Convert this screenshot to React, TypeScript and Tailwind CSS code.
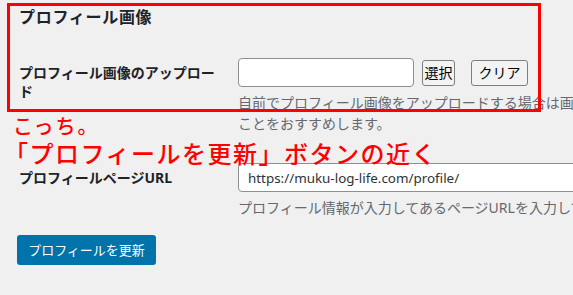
const FONT = "font-['Noto_Sans','Noto_Sans_CJK_JP',sans-serif]";

const App = () => {
  return (
    <div className={`relative w-[573px] h-[295px] overflow-hidden bg-[#f0f0f0] text-[#1d2327] ${FONT}`}>
      {/* 設定フォーム */}
      <div className="pt-[7px] pl-[19px]">
        <h2 className="text-[16px] font-bold leading-[20px] tracking-[0.7px]">プロフィール画像</h2>

        <div className="flex mt-[31px]">
          <div className="w-[219px] shrink-0 pr-[19px] pt-[5px] text-[14px] font-bold leading-[19px]">
            プロフィール画像のアップロード
          </div>
          <div>
            <div className="flex items-center">
              <input
                type="text"
                className="w-[176px] h-[29px] bg-white border border-[#8c8f94] rounded-[4px] outline-none"
              />
              <button className="ml-[8px] w-[33px] h-[26px] text-[14px] leading-none border border-[#7e7e7e] rounded-[3px] bg-[#f3f3f3] text-black">
                選択
              </button>
              <button className="ml-[16px] w-[57px] h-[26px] text-[14px] leading-none border border-[#7e7e7e] rounded-[3px] bg-[#f3f3f3] text-black">
                クリア
              </button>
            </div>
            <p className="mt-[5px] text-[14px] leading-[21px] text-[#646970] whitespace-nowrap">
              自前でプロフィール画像をアップロードする場合は画像を正方形にする
              <br />
              ことをおすすめします。
            </p>
          </div>
        </div>

        <div className="flex mt-[29px]">
          <div className="w-[219px] shrink-0 pr-[19px] pt-[5px] text-[14px] font-bold leading-[19px]">
            プロフィールページURL
          </div>
          <div>
            <input
              type="text"
              defaultValue="https://muku-log-life.com/profile/"
              className="w-[400px] h-[29px] px-[9px] bg-white border border-[#8c8f94] rounded-[4px] text-[13.4px] text-[#2c3338] outline-none"
            />
            <p className="mt-[5px] text-[14px] leading-[21px] text-[#646970] whitespace-nowrap">
              プロフィール情報が入力してあるページURLを入力してください。
            </p>
          </div>
        </div>

        <button className="mt-[17px] -ml-[2px] w-[139px] h-[30px] rounded-[3px] bg-[#0073aa] text-white text-[13px] leading-none">
          プロフィールを更新
        </button>
      </div>

      {/* 注釈 */}
      <div className="absolute left-[7px] top-[3px] w-[534px] h-[109px] border-[3px] border-[#ff0000]" />
      <div className="absolute left-[13px] top-[117px] text-[20px] leading-none tracking-[2px] font-medium text-[#ff0000]">
        こっち。
      </div>
      <div className="absolute left-[4px] top-[142px] text-[24px] leading-none tracking-[1.5px] font-medium text-[#ff0000] whitespace-nowrap">
        「プロフィールを更新」ボタンの近く
      </div>
    </div>
  );
};

export default App;
